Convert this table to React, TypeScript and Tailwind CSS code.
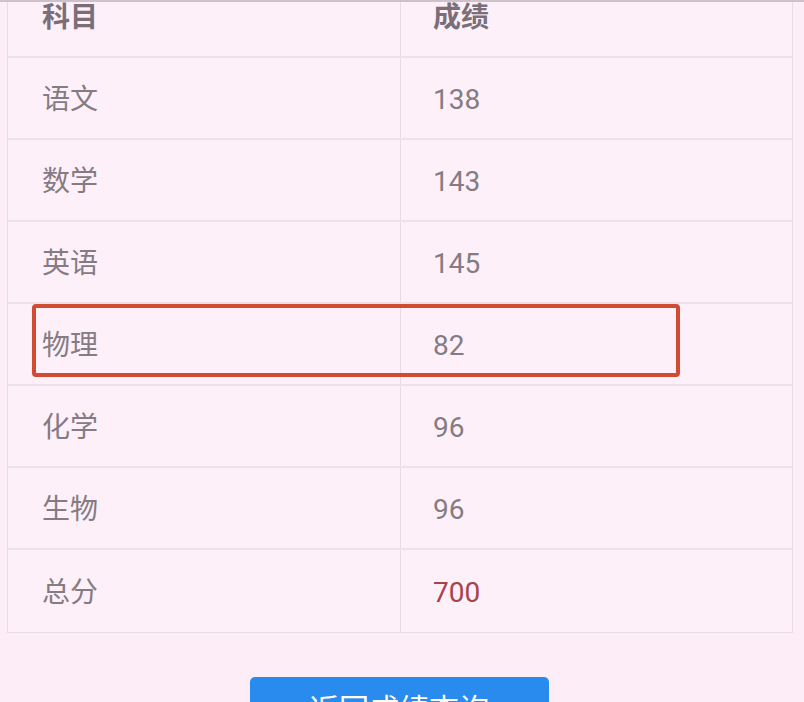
const rows = [
  { name: "语文", score: "138" },
  { name: "数学", score: "143" },
  { name: "英语", score: "145" },
  { name: "物理", score: "82", mark: true },
  { name: "化学", score: "96" },
  { name: "生物", score: "96" },
  { name: "总分", score: "700", total: true },
];

const font = { fontFamily: '"Roboto", "Noto Sans CJK SC", sans-serif' };

export default function App() {
  return (
    <div
      className="h-[702px] w-[804px] overflow-hidden bg-[#fcedf6] border-t-2 border-[#cdc1ca]"
      style={font}
    >
      <div className="-mt-[27px] ml-[7px] mr-[11px] border border-[#e9dbe4] bg-[#fdf0f8]">
        <div className="flex h-[82px] items-center border-b-2 border-[#eee2ea] text-[28px] font-bold text-[#7a6f78]">
          <div className="flex h-full w-[393px] items-center border-r border-[#e9dbe4] pl-[34px] pt-[3px]">
            科目
          </div>
          <div className="pl-[32px] pt-[3px]">成绩</div>
        </div>
        {rows.map((r, i) => (
          <div
            key={r.name}
            className={
              "relative flex h-[82px] items-center text-[28px] text-[#857b84] " +
              (i < rows.length - 1 ? "border-b-2 border-[#eee2ea]" : "")
            }
          >
            <div className="flex h-full w-[393px] items-center border-r border-[#e9dbe4] pl-[34px] pt-[3px]">
              {r.name}
            </div>
            <div className={"pl-[32px] pt-[3px] " + (r.total ? "text-[#a8424c]" : "")}>
              {r.score}
            </div>
            {r.mark && (
              <div className="absolute left-[24px] top-[0px] h-[73px] w-[648px] rounded-[4px] border-[4px] border-[#cf4b31]" />
            )}
          </div>
        ))}
      </div>
      <div className="mt-[44px] flex justify-center pr-[6px]">
        <button className="h-[64px] w-[299px] rounded-[5px] bg-[#2a8bee] text-[30px] text-white">
          返回成绩查询
        </button>
      </div>
    </div>
  );
}
